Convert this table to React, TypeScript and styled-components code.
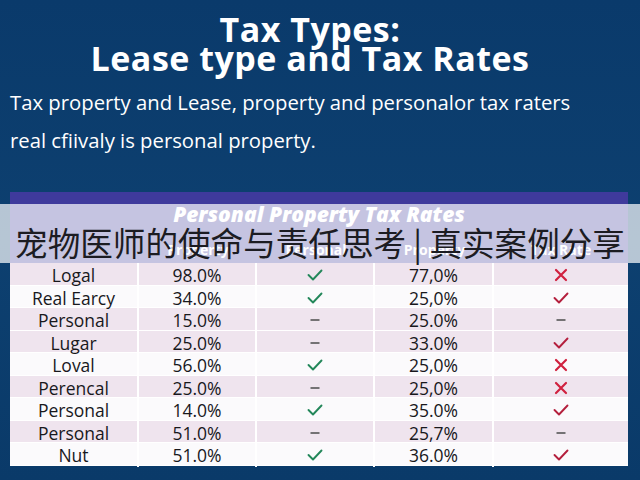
import React from 'react';
import styled, { createGlobalStyle } from 'styled-components';

type Mark = 'check' | 'cross' | 'dash';

interface IRow {
  name: string;
  rate: string;
  personal: Mark;
  property: string;
  tax: Mark;
  shaded: boolean;
}

const rows: IRow[] = [
  { name: 'Logal', rate: '98.0%', personal: 'check', property: '77,0%', tax: 'cross', shaded: true },
  { name: 'Real Earcy', rate: '34.0%', personal: 'check', property: '25,0%', tax: 'check', shaded: false },
  { name: 'Personal', rate: '15.0%', personal: 'dash', property: '25.0%', tax: 'dash', shaded: true },
  { name: 'Lugar', rate: '25.0%', personal: 'dash', property: '33.0%', tax: 'check', shaded: true },
  { name: 'Loval', rate: '56.0%', personal: 'check', property: '25,0%', tax: 'cross', shaded: false },
  { name: 'Perencal', rate: '25.0%', personal: 'dash', property: '25,0%', tax: 'cross', shaded: true },
  { name: 'Personal', rate: '14.0%', personal: 'check', property: '35.0%', tax: 'check', shaded: false },
  { name: 'Personal', rate: '51.0%', personal: 'dash', property: '25,7%', tax: 'dash', shaded: true },
  { name: 'Nut', rate: '51.0%', personal: 'check', property: '36.0%', tax: 'check', shaded: false },
];

const headers = ['', 'Property', 'Personal', 'Property', 'Tax Rate'];

const MarkIcon = ({ kind, tone }: { kind: Mark; tone: 'green' | 'red' }) => {
  const color = tone === 'green' ? '#23875a' : '#b41f3d';
  if (kind === 'check') {
    return (
      <svg width="16" height="12" viewBox="0 0 16 12">
        <polyline points="1.5,6 6,10.5 14.5,1.5" fill="none" stroke={color} strokeWidth="1.9" strokeLinecap="round" strokeLinejoin="round" />
      </svg>
    );
  }
  if (kind === 'cross') {
    return (
      <svg width="14" height="14" viewBox="0 0 14 14">
        <path d="M2 2 L12 12 M12 2 L2 12" fill="none" stroke="#d0213f" strokeWidth="2.2" strokeLinecap="round" />
      </svg>
    );
  }
  return (
    <svg width="12" height="4" viewBox="0 0 12 4">
      <line x1="1.5" y1="2" x2="10.5" y2="2" stroke="#555" strokeWidth="1.6" />
    </svg>
  );
};

const App = () => {
  return (
    <>
      <GlobalStyle />
      <Page>
        <Heading>
          <Title>
            Tax Types:
            <br />
            Lease type and Tax Rates
          </Title>
          <Lead>Tax property and Lease, property and personalor tax raters</Lead>
          <Lead>real cfiivaly is personal property.</Lead>
        </Heading>

        <TableCard>
          <TableTitle>Personal Property Tax Rates</TableTitle>
          <HeaderRow>
            {headers.map((label, index) => (
              <HeaderCell key={index}>{label}</HeaderCell>
            ))}
          </HeaderRow>
          {rows.map((row, index) => (
            <BodyRow key={index} $shaded={row.shaded}>
              <Cell>{row.name}</Cell>
              <Cell>{row.rate}</Cell>
              <Cell><MarkIcon kind={row.personal} tone="green" /></Cell>
              <Cell>{row.property}</Cell>
              <Cell><MarkIcon kind={row.tax} tone="red" /></Cell>
            </BodyRow>
          ))}
        </TableCard>

        <Banner>宠物医师的使命与责任思考 | 真实案例分享</Banner>
      </Page>
    </>
  );
};

const GlobalStyle = createGlobalStyle`
  html, body {
    margin: 0;
    padding: 0;
    background: #0b3c6d;
  }
  * {
    box-sizing: border-box;
  }
`;

const Page = styled.div`
  position: relative;
  width: 640px;
  height: 480px;
  overflow: hidden;
  background: linear-gradient(180deg, #0a3a6b 0%, #0d4070 50%, #0a3a69 100%);
  font-family: 'Open Sans', 'Liberation Sans', sans-serif;
  color: #fff;
`;

const Heading = styled.header`
  padding: 15px 0 0 10px;
  height: 192px;
`;

const Title = styled.h1`
  margin: 0 30px 10px 0;
  text-align: center;
  font-size: 34px;
  line-height: 29px;
  font-weight: 700;
  letter-spacing: 0.5px;
`;

const Lead = styled.p`
  margin: 0;
  font-size: 20.3px;
  line-height: 38px;
  font-weight: 400;
  white-space: nowrap;
`;

const TableCard = styled.section`
  margin-left: 10px;
  width: 618px;
  background: #f9f7fa;
`;

const TableTitle = styled.div`
  height: 43px;
  padding-top: 8px;
  background: #3f3a9c;
  text-align: center;
  font-size: 21px;
  font-weight: 800;
  font-style: italic;
  color: #fff;
`;

const columns = '129px 118px 118px 119px 134px';

const HeaderRow = styled.div`
  display: grid;
  grid-template-columns: ${columns};
  height: 28px;
  background: #3f3a9c;
`;

const HeaderCell = styled.div`
  display: flex;
  align-items: center;
  justify-content: center;
  font-size: 14px;
  font-weight: 700;
  color: #fff;
`;

const BodyRow = styled.div<{ $shaded: boolean }>`
  display: grid;
  grid-template-columns: ${columns};
  height: 22.5px;
  background: ${({ $shaded }) => ($shaded ? '#efe4ee' : '#fbfafc')};
  border-bottom: 1px solid #ffffff;
`;

const Cell = styled.div`
  display: flex;
  align-items: center;
  justify-content: center;
  border-right: 2px solid #ffffff;
  font-size: 17.5px;
  color: #18181c;

  &:last-child {
    border-right: none;
  }
`;

const Banner = styled.div`
  position: absolute;
  top: 204px;
  left: 0;
  right: 0;
  height: 59px;
  padding-top: 18px;
  background: rgba(255, 255, 255, 0.7);
  text-align: center;
  font-family: 'Noto Sans CJK SC', 'Noto Sans', sans-serif;
  font-size: 32.6px;
  line-height: 40px;
  color: #1c1c22;
  white-space: nowrap;
`;

export default App;
